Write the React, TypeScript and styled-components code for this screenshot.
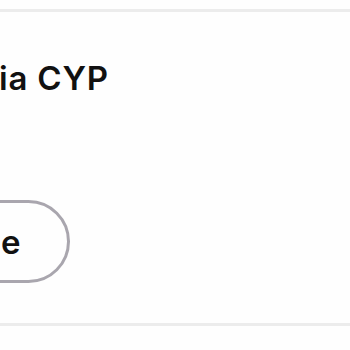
import React from 'react';
import styled, { createGlobalStyle } from 'styled-components';

const GlobalStyle = createGlobalStyle`
  html,
  body {
    margin: 0;
    padding: 0;
    background: #fefefe;
    overflow: hidden;
  }

  body {
    font-family: 'Inter', 'Liberation Sans', sans-serif;
    color: #111111;
  }
`;

const Page = styled.div`
  width: 350px;
  height: 350px;
  padding-top: 9px;
  box-sizing: border-box;
`;

const Card = styled.section`
  height: 317px;
  box-sizing: border-box;
  border-top: 3px solid #ececec;
  border-bottom: 3px solid #ececec;
  display: flex;
  flex-direction: column;
  align-items: flex-start;
  padding-top: 48px;
`;

const Title = styled.h2`
  margin: 0 0 0 -1px;
  font-size: 33px;
  font-weight: 600;
  line-height: 36px;
  letter-spacing: 0.8px;
  white-space: nowrap;
`;

const PillButton = styled.button`
  margin: 104px 0 0 -40px;
  height: 83px;
  padding: 0 46px 0 38px;
  border: 3px solid #a9a6ae;
  border-radius: 999px;
  background: transparent;
  font-family: inherit;
  font-size: 33px;
  font-weight: 600;
  color: #111111;
  white-space: nowrap;
`;

export default function App() {
  return (
    <Page>
      <GlobalStyle />
      <Card>
        <Title>ia CYP</Title>
        <PillButton>e</PillButton>
      </Card>
    </Page>
  );
}
